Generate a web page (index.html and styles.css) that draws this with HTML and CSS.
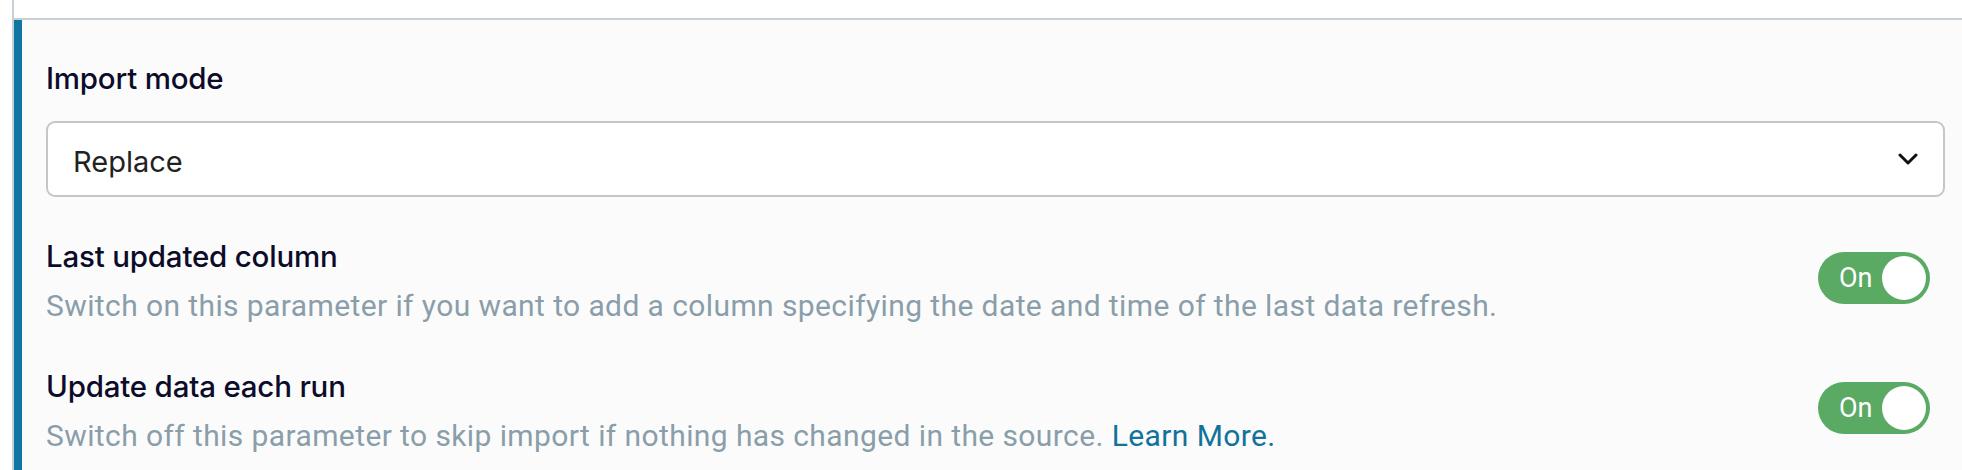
FILE: index.html
```html
<!DOCTYPE html>
<html>
<head>
<meta charset="utf-8">
<link rel="stylesheet" href="styles.css">
</head>
<body>
<div class="frame">
  <div class="topbar"></div>
  <div class="panel">
    <div class="field">
      <div class="label">Import mode</div>
      <div class="select">
        <span class="select-value">Replace</span>
        <svg class="chevron" width="20" height="12" viewBox="0 0 20 12"><polyline points="2,2 10,10 18,2" fill="none" stroke="#111" stroke-width="3" stroke-linecap="round" stroke-linejoin="round"/></svg>
      </div>
    </div>
    <div class="row row-first">
      <div class="row-text">
        <div class="label">Last updated column</div>
        <div class="desc">Switch on this parameter if you want to add a column specifying the date and time of the last data refresh.</div>
      </div>
      <div class="toggle"><span class="toggle-text">On</span><span class="knob"></span></div>
    </div>
    <div class="row">
      <div class="row-text">
        <div class="label">Update data each run</div>
        <div class="desc">Switch off this parameter to skip import if nothing has changed in the source. <a class="link" href="#">Learn More.</a></div>
      </div>
      <div class="toggle"><span class="toggle-text">On</span><span class="knob"></span></div>
    </div>
  </div>
</div>
</body>
</html>
```
FILE: styles.css
```css
html, body {
  margin: 0;
  padding: 0;
  background: #ffffff;
}
body {
  width: 1962px;
  height: 470px;
  overflow: hidden;
  font-family: Inter, "Liberation Sans", sans-serif;
}
.frame {
  border-left: 2px solid #c9d0d5;
  height: 470px;
  box-sizing: border-box;
  margin-left: 12px;
  display: flex;
  flex-direction: column;
}
.topbar {
  height: 18px;
  border-bottom: 2px solid #c9d0d5;
  margin-left: -2px;
  flex: none;
}
.panel {
  flex: 1;
  background: #fbfbfb;
  border-left: 8px solid #0f76a1;
  padding: 40px 17px 0 24px;
}
.label {
  font-size: 29.5px;
  font-weight: 500;
  color: #0c0c2a;
  line-height: 36px;
  letter-spacing: -0.2px;
}
.field .label {
  margin-bottom: 25px;
}
.select {
  height: 76px;
  box-sizing: border-box;
  border: 2px solid #c6c6c6;
  border-radius: 9px;
  background: #ffffff;
  display: flex;
  align-items: center;
  justify-content: space-between;
  padding: 0 25px 0 25px;
}
.select-value {
  font-size: 29px;
  color: #222222;
  padding-top: 4px;
}
.chevron {
  display: block;
}
.row {
  display: flex;
  align-items: flex-start;
  justify-content: space-between;
  padding-right: 15px;
  margin-top: 44px;
}
.row-first {
  margin-top: 41px;
}
.desc {
  font-family: Roboto, "Liberation Sans", sans-serif;
  font-size: 30px;
  color: #8a9eaa;
  line-height: 36px;
  margin-top: 14px;
  letter-spacing: 0.4px;
}
.link {
  color: #11729a;
  text-decoration: none;
}
.toggle {
  width: 112px;
  height: 52px;
  border-radius: 26px;
  background: #5aaa64;
  box-sizing: border-box;
  padding: 4px 4px 4px 21px;
  display: flex;
  align-items: center;
  justify-content: space-between;
  flex: none;
  margin-top: 14px;
}
.toggle-text {
  font-family: Roboto, "Liberation Sans", sans-serif;
  font-size: 27px;
  color: #ffffff;
}
.knob {
  width: 44px;
  height: 44px;
  border-radius: 50%;
  background: #ffffff;
}
```
